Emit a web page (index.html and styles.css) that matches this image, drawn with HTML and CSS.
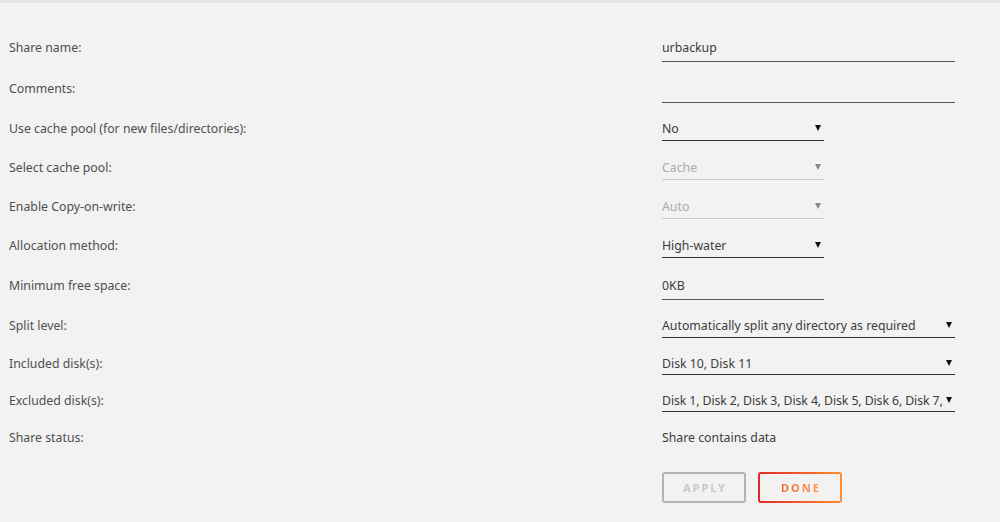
FILE: index.html
```html
<!DOCTYPE html>
<html lang="en">

<head>
    <meta charset="UTF-8">
    <title>Share settings</title>
    <link rel="stylesheet" href="styles.css">
</head>

<body>
    <div class="topbar"></div>

    <form class="share-form">
        <div class="row text">
            <label>Share name:</label>
            <div class="field wide">urbackup</div>
        </div>
        <div class="row text">
            <label>Comments:</label>
            <div class="field wide"></div>
        </div>
        <div class="row">
            <label>Use cache pool (for new files/directories):</label>
            <div class="select">No<span class="arrow"></span></div>
        </div>
        <div class="row">
            <label>Select cache pool:</label>
            <div class="select disabled">Cache<span class="arrow"></span></div>
        </div>
        <div class="row">
            <label>Enable Copy-on-write:</label>
            <div class="select disabled">Auto<span class="arrow"></span></div>
        </div>
        <div class="row">
            <label>Allocation method:</label>
            <div class="select">High-water<span class="arrow"></span></div>
        </div>
        <div class="row text">
            <label>Minimum free space:</label>
            <div class="field">0KB</div>
        </div>
        <div class="row">
            <label>Split level:</label>
            <div class="select wide">Automatically split any directory as required<span class="arrow"></span></div>
        </div>
        <div class="row multi">
            <label>Included disk(s):</label>
            <div class="select wide">Disk 10, Disk 11<span class="arrow"></span></div>
        </div>
        <div class="row multi">
            <label>Excluded disk(s):</label>
            <div class="select wide"><span class="clip">Disk 1, Disk 2, Disk 3, Disk 4, Disk 5, Disk 6, Disk 7,</span><span class="arrow"></span></div>
        </div>
        <div class="row multi">
            <label>Share status:</label>
            <div class="status">Share contains data</div>
        </div>

        <div class="actions">
            <button type="button" class="btn apply" disabled>APPLY</button>
            <button type="button" class="btn done"><span>DONE</span></button>
        </div>
    </form>
</body>

</html>
```

FILE: styles.css
```css
* {
    box-sizing: border-box;
}

body {
    margin: 0;
    background: #f2f2f2;
    color: #4f4f4f;
    font-family: "Noto Sans", "Open Sans", sans-serif;
    font-size: 12.3px;
    min-height: 100vh;
}

.topbar {
    height: 3px;
    background: #e4e4e4;
}

.share-form {
    padding: 23.5px 0 0 9px;
}

/* one line per setting */
.row {
    display: grid;
    grid-template-columns: 653px 1fr;
    align-items: center;
    height: 39px;
}

.row.text {
    height: 41px;
}

.row.multi {
    height: 37px;
}

.field,
.select {
    display: flex;
    align-items: center;
    width: 162px;
    height: 30px;
    padding-top: 2px;
    border-bottom: 1px solid #555;
    color: #3c3c3c;
}

.field.wide,
.select.wide {
    width: 293px;
}

.select {
    height: 26px;
    padding-top: 1px;
    justify-content: space-between;
    border-bottom-color: #333;
    padding-right: 3px;
}

.row.multi .select {
    height: 24px;
}

.select.disabled {
    color: #aaa;
    border-bottom-color: #ccc;
}

/* long disk list, fits right up to the arrow */
.clip {
    white-space: nowrap;
    overflow: hidden;
    flex: 1;
    letter-spacing: -0.1px;
}

.arrow {
    width: 0;
    height: 0;
    flex: none;
    border-left: 3px solid transparent;
    border-right: 3px solid transparent;
    border-top: 6px solid #111;
}

.select.disabled .arrow {
    border-top-color: #888;
}

.status {
    color: #3c3c3c;
}

/* buttons */
.actions {
    display: flex;
    gap: 12px;
    margin: 16.5px 0 0 653px;
}

.btn {
    width: 84px;
    height: 31px;
    border-radius: 3px;
    font-family: inherit;
    font-size: 11px;
    font-weight: bold;
    letter-spacing: 2px;
    padding: 0 0 0 2px;
}

.btn.apply {
    border: 2px solid #b3b3b3;
    background: transparent;
    color: #c8c8c8;
}

.btn.done {
    border: 2px solid transparent;
    background: linear-gradient(#f2f2f2, #f2f2f2) padding-box,
                linear-gradient(90deg, #e22828, #ff8c2f) border-box;
}

.btn.done span {
    background: linear-gradient(90deg, #f46a3a, #ff9a4a);
    -webkit-background-clip: text;
    background-clip: text;
    color: transparent;
}
```
